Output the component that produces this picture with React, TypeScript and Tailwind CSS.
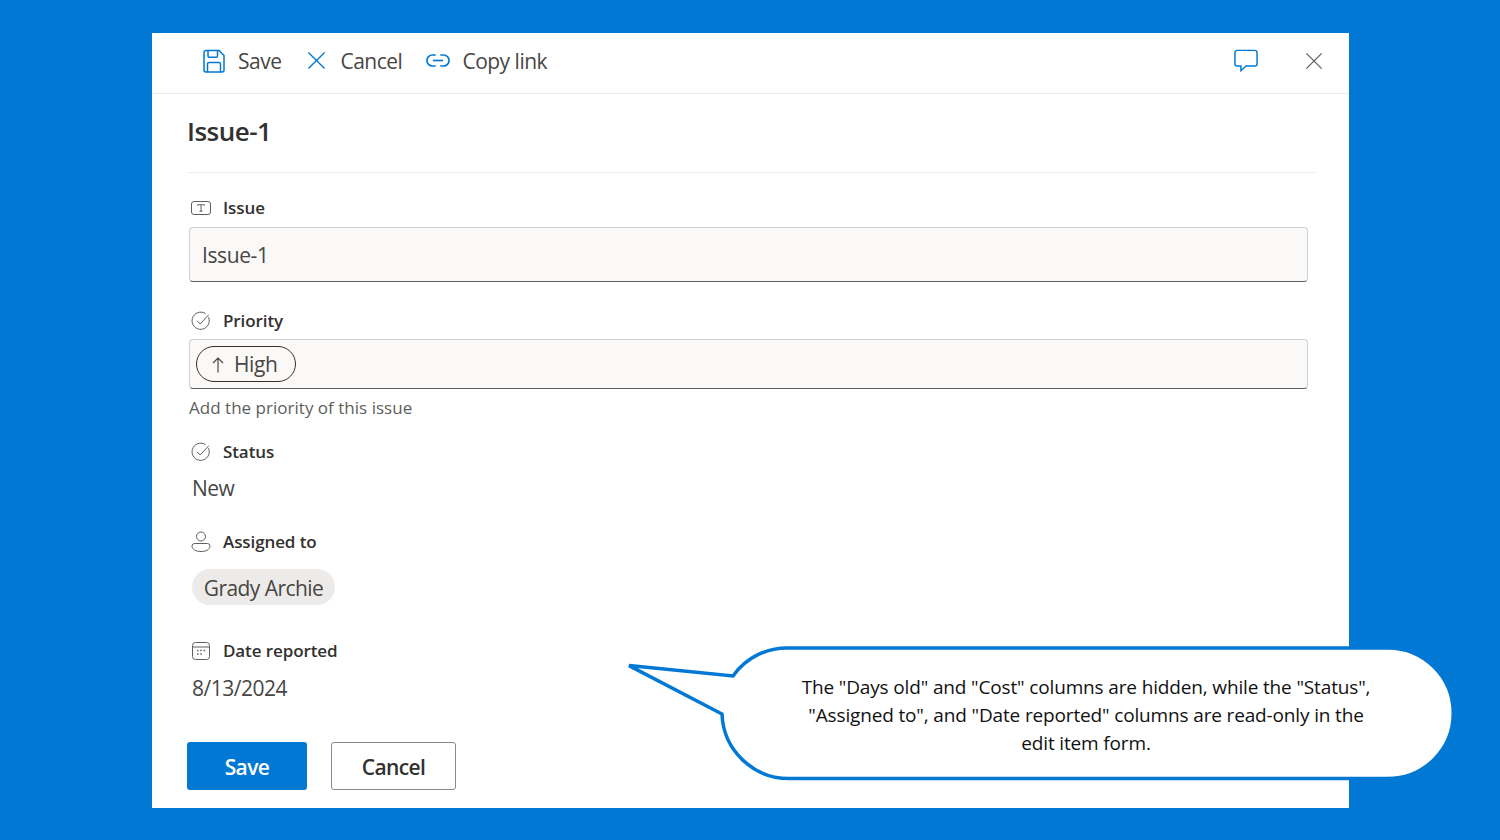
import React from "react";

const font = { fontFamily: '"Open Sans", "Noto Sans", sans-serif' };

function SaveIcon() {
  return (
    <svg width="24" height="24" viewBox="0 0 24 24" fill="none" stroke="#0078d4" strokeWidth="1.5" className="shrink-0">
      <path d="M2 3.5 A2 2 0 0 1 4 1.5 H17 L22 6.5 V21 A2 2 0 0 1 20 23 H4 A2 2 0 0 1 2 21 Z" />
      <path d="M6 1.5 V7 A1.2 1.2 0 0 0 7.2 8.2 H14.3 A1.2 1.2 0 0 0 15.5 7 V1.5" />
      <path d="M5.5 23 V15 A1.5 1.5 0 0 1 7 13.5 H17 A1.5 1.5 0 0 1 18.5 15 V23" />
    </svg>
  );
}

function XIcon({ color, size }: { color: string; size: number }) {
  return (
    <svg width={size} height={size} viewBox="0 0 20 20" fill="none" stroke={color} strokeWidth="1.4" className="shrink-0">
      <path d="M1.5 1.5 L18.5 18.5 M18.5 1.5 L1.5 18.5" />
    </svg>
  );
}

function LinkIcon() {
  return (
    <svg width="24" height="15" viewBox="0 0 26 16" fill="none" stroke="#0078d4" strokeWidth="1.8" className="shrink-0">
      <path d="M10.5 2 H7 A6 6 0 0 0 7 14 H10.5" />
      <path d="M15.5 2 H19 A6 6 0 0 1 19 14 H15.5" />
      <path d="M7.5 8 H18.5" />
    </svg>
  );
}

function CommentIcon() {
  return (
    <svg width="24" height="24" viewBox="0 0 26 25" fill="none" stroke="#0078d4" strokeWidth="1.6">
      <path d="M3.5 1 H22.5 A2.5 2.5 0 0 1 25 3.5 V15.5 A2.5 2.5 0 0 1 22.5 18 H13 L7.5 23 V18 H3.5 A2.5 2.5 0 0 1 1 15.5 V3.5 A2.5 2.5 0 0 1 3.5 1 Z" />
    </svg>
  );
}

function TextFieldIcon() {
  return (
    <svg width="20" height="14" viewBox="0 0 20 14" fill="none" stroke="#605e5c" strokeWidth="1">
      <rect x="0.5" y="0.5" width="19" height="13" rx="2.5" />
      <path d="M6.5 4.5 V3.8 H13.5 V4.5 M10 3.8 V10.2 M8.5 10.2 H11.5" />
    </svg>
  );
}

function CheckIcon() {
  return (
    <svg width="20" height="20" viewBox="0 0 20 20" fill="none" stroke="#605e5c" strokeWidth="1">
      <path d="M17.5 6.2 A8.6 8.6 0 1 1 14.6 2.7" />
      <path d="M6 9.8 L9.2 13 L17.8 3.6" />
    </svg>
  );
}

function PersonIcon() {
  return (
    <svg width="20" height="22" viewBox="0 0 20 22" fill="none" stroke="#605e5c" strokeWidth="1">
      <circle cx="10" cy="5.5" r="4.5" />
      <path d="M3.5 12.5 H16.5 A2.5 2.5 0 0 1 19 15 C19 18.5 15 20.5 10 20.5 C5 20.5 1 18.5 1 15 A2.5 2.5 0 0 1 3.5 12.5 Z" />
    </svg>
  );
}

function CalendarIcon() {
  return (
    <svg width="18" height="18" viewBox="0 0 18 18" fill="none" stroke="#605e5c" strokeWidth="1">
      <rect x="0.5" y="0.5" width="17" height="17" rx="3" />
      <path d="M1 5 H17" />
      <path d="M5 8.5 H6.5 M8.3 8.5 H9.8 M11.6 8.5 H13.1 M5 12 H6.5 M8.3 12 H9.8" strokeWidth="1.3" />
    </svg>
  );
}

function FieldLabel({ icon, label }: { icon: React.ReactNode; label: string }) {
  return (
    <div className="flex h-[24px] items-center pl-[4px] text-[#323130]">
      <span className="flex w-[20px] justify-center">{icon}</span>
      <span className="ml-[12px] text-[17px] font-semibold tracking-[-0.1px]">{label}</span>
    </div>
  );
}

function ToolbarButton({ icon, label, gap }: { icon: React.ReactNode; label: string; gap: string }) {
  return (
    <div className={`flex items-center ${gap}`}>
      <span className="mb-[3px] flex">{icon}</span>
      <span className="text-[21px] tracking-[-0.5px] text-[#484644]">{label}</span>
    </div>
  );
}

export default function App() {
  return (
    <div className="relative h-[840px] w-full overflow-hidden bg-[#0078d4] pl-[152px] pt-[33px]" style={font}>
      <div className="flex h-[775px] w-[1197px] flex-col bg-white">
        <div className="flex h-[61px] shrink-0 items-center border-b border-[#edebe9] pb-[2px] pl-[50px] pr-[26px]">
          <ToolbarButton icon={<SaveIcon />} label="Save" gap="gap-[12px]" />
          <div className="ml-[26px]">
            <ToolbarButton icon={<XIcon color="#0078d4" size={19} />} label="Cancel" gap="gap-[14px]" />
          </div>
          <div className="ml-[24px]">
            <ToolbarButton icon={<LinkIcon />} label="Copy link" gap="gap-[12px]" />
          </div>
          <div className="mb-[3px] ml-auto flex items-center gap-[47px]">
            <CommentIcon />
            <XIcon color="#605e5c" size={18} />
          </div>
        </div>

        <div className="flex flex-1 flex-col px-[35px]">
          <div className="flex h-[79px] w-[1128px] items-center border-b border-[#edebe9] pb-[4px]">
            <h1 className="text-[26px] font-semibold tracking-[-0.5px] text-[#323130]">Issue-1</h1>
          </div>

          <div className="mt-[23px]">
            <FieldLabel icon={<TextFieldIcon />} label="Issue" />
          </div>
          <div className="ml-[2px] mt-[7px] flex h-[55px] w-[1119px] items-center rounded-[4px] border border-[#d2d0ce] border-b-[#605e5c] bg-[#faf9f8] pl-[12px] pt-[2px] text-[21px] tracking-[-0.4px] text-[#484644]">
            Issue-1
          </div>

          <div className="mt-[27px]">
            <FieldLabel icon={<CheckIcon />} label="Priority" />
          </div>
          <div className="ml-[2px] mt-[6px] flex h-[50px] w-[1119px] items-center rounded-[4px] border border-[#d2d0ce] border-b-[#605e5c] bg-[#faf9f8] pl-[6px]">
            <div className="flex h-[36px] w-[100px] items-center gap-[10px] rounded-full border border-[#323130] pl-[15px] pt-[2px] text-[21px] tracking-[-0.4px] text-[#484644]">
              <svg width="12" height="16" viewBox="0 0 12 16" fill="none" stroke="#484644" strokeWidth="1.2" className="shrink-0">
                <path d="M6 15.5 V1 M1 6 L6 1 L11 6" />
              </svg>
              <span>High</span>
            </div>
          </div>
          <p className="ml-[2px] mt-[6px] text-[17px] tracking-[0.02px] text-[#605e5c]">Add the priority of this issue</p>

          <div className="mt-[19px]">
            <FieldLabel icon={<CheckIcon />} label="Status" />
          </div>
          <p className="ml-[5px] mt-[9px] text-[21px] tracking-[-0.6px] text-[#484644]">New</p>

          <div className="mt-[26px]">
            <FieldLabel icon={<PersonIcon />} label="Assigned to" />
          </div>
          <div className="ml-[5px] mt-[15px] flex h-[36px] w-[143px] items-center justify-center rounded-full bg-[#edebe9] pt-[4px] text-[21px] tracking-[-0.55px] text-[#484644]">
            Grady Archie
          </div>

          <div className="mt-[34px]">
            <FieldLabel icon={<CalendarIcon />} label="Date reported" />
          </div>
          <p className="ml-[5px] mt-[10px] text-[21px] tracking-[-0.5px] text-[#484644]">8/13/2024</p>

          <div className="mt-[37px] flex gap-[24px]">
            <button className="flex h-[48px] w-[120px] items-center justify-center rounded-[3px] bg-[#0078d4] pt-[4px] text-[21px] font-semibold tracking-[-0.6px] text-white">
              Save
            </button>
            <button className="flex h-[48px] w-[125px] items-center justify-center rounded-[3px] border border-[#8a8886] bg-white pt-[4px] text-[21px] font-semibold tracking-[-0.6px] text-[#323130]">
              Cancel
            </button>
          </div>
        </div>
      </div>

      <div className="absolute left-[626px] top-[645px] h-[136px] w-[830px]">
        <svg width="830" height="136" viewBox="626 645 830 136" className="absolute left-0 top-0">
          <path
            d="M629 665.6 L733 676 A66 66 0 0 1 790 648 L1388 648 A65.25 65.25 0 0 1 1388 778.5 L790 778.5 A67 67 0 0 1 722 714 Z"
            fill="#ffffff"
            stroke="#0078d4"
            strokeWidth="3.5"
          />
        </svg>
        <div className="absolute left-[165px] top-[28px] w-[590px] text-center text-[19px] leading-[28px] tracking-[-0.15px] text-[#111111]">
          The "Days old" and "Cost" columns are hidden, while the "Status",
          <br />
          "Assigned to", and "Date reported" columns are read-only in the
          <br />
          edit item form.
        </div>
      </div>
    </div>
  );
}
